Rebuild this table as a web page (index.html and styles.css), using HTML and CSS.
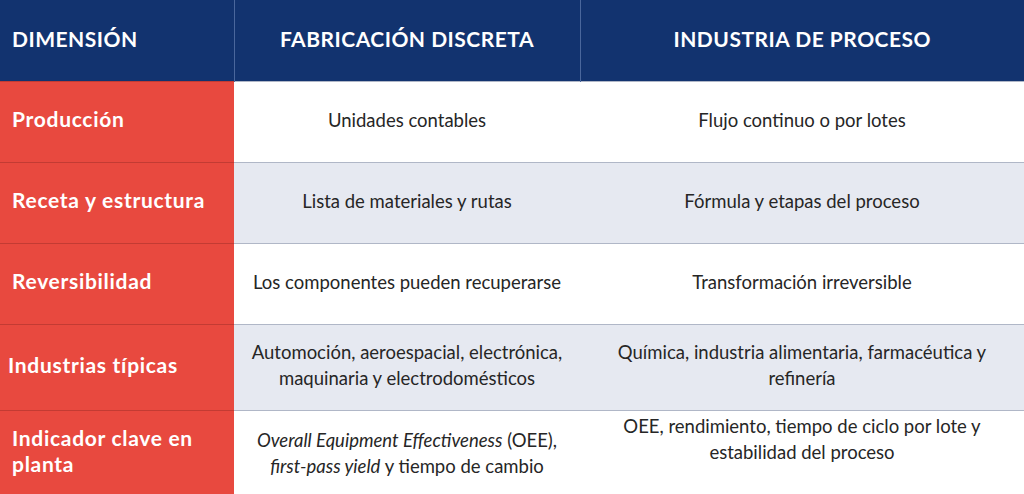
FILE: index.html
```html
<!DOCTYPE html>
<html lang="es">
<head>
<meta charset="utf-8">
<link rel="stylesheet" href="styles.css">
</head>
<body>
<table class="cmp">
  <colgroup>
    <col class="c1"><col class="c2"><col class="c3">
  </colgroup>
  <thead>
    <tr class="head">
      <th class="h-dim">DIMENSIÓN</th>
      <th>FABRICACIÓN DISCRETA</th>
      <th>INDUSTRIA DE PROCESO</th>
    </tr>
  </thead>
  <tbody>
    <tr class="r1">
      <th class="dim">Producción</th>
      <td>Unidades contables</td>
      <td>Flujo continuo o por lotes</td>
    </tr>
    <tr class="r2 alt">
      <th class="dim">Receta y estructura</th>
      <td>Lista de materiales y rutas</td>
      <td>Fórmula y etapas del proceso</td>
    </tr>
    <tr class="r3">
      <th class="dim">Reversibilidad</th>
      <td>Los componentes pueden recuperarse</td>
      <td>Transformación irreversible</td>
    </tr>
    <tr class="r4 alt">
      <th class="dim dim-tight">Industrias típicas</th>
      <td>Automoción, aeroespacial, electrónica,<br>maquinaria y electrodomésticos</td>
      <td>Química, industria alimentaria, farmacéutica y<br>refinería</td>
    </tr>
    <tr class="r5">
      <th class="dim">Indicador clave en<br>planta</th>
      <td class="shift-down"><em>Overall Equipment Effectiveness</em> (OEE),<br><em>first-pass yield</em> y tiempo de cambio</td>
      <td class="shift-up">OEE, rendimiento, tiempo de ciclo por lote y<br>estabilidad del proceso</td>
    </tr>
  </tbody>
</table>
</body>
</html>
```

FILE: styles.css
```css
html, body {
  margin: 0;
  padding: 0;
  background: #ffffff;
}

body {
  font-family: Lato, "Open Sans", "Liberation Sans", sans-serif;
  width: 1024px;
  height: 494px;
  overflow: hidden;
}

.cmp {
  width: 1024px;
  border-collapse: collapse;
  table-layout: fixed;
}

.c1 { width: 234px; }
.c2 { width: 346px; }
.c3 { width: 444px; }

.head {
  height: 81px;
  background: #12336f;
}

.head th {
  color: #ffffff;
  font-weight: 700;
  font-size: 21px;
  letter-spacing: 0.5px;
  text-align: center;
  padding: 0 0 4px 0;
  border-left: 1px solid #4a679c;
}

.head th.h-dim {
  text-align: left;
  padding-left: 12px;
  border-left: none;
}

tbody tr {
  border-top: 1px solid #b0b7c7;
}

.r1, .r2, .r3 { height: 81px; }
.r4 { height: 86px; }
.r5 { height: 86px; }

.alt td {
  background: #e6e9f1;
}

td {
  background: #ffffff;
  color: #262626;
  font-size: 18.5px;
  line-height: 26px;
  text-align: center;
  padding: 0 2px 4px 2px;
  vertical-align: middle;
}

th.dim {
  background: #e8493f;
  color: #ffffff;
  font-weight: 700;
  font-size: 21px;
  letter-spacing: 0.7px;
  line-height: 26px;
  text-align: left;
  padding: 0 4px 5px 12px;
  border-top: 1px solid #c33b33;
  vertical-align: middle;
}

th.dim-tight {
  padding-left: 8px;
}

.shift-down {
  padding-top: 4px;
}

.shift-up {
  padding-bottom: 28px;
}

em {
  font-style: italic;
}

tbody tr:last-child {
  border-bottom: 1px solid #b0b7c7;
}
```
